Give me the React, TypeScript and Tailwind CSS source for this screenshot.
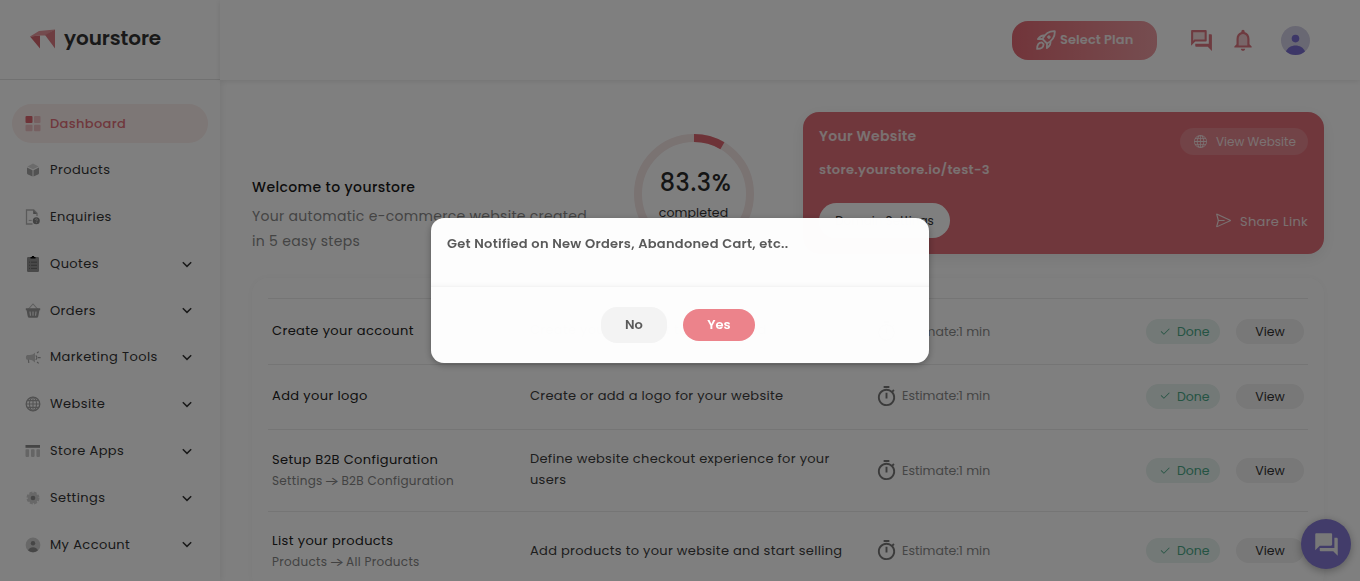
import React from "react";
import { MdForum, MdNotificationsNone, MdOutlineForum, MdOutlineTimer } from "react-icons/md";
import { VscSend } from "react-icons/vsc";
import { BsCheck2, BsGlobe } from "react-icons/bs";

function Svg({ children }: { children: React.ReactNode }) {
  return (
    <svg width="16" height="16" viewBox="0 0 16 16" fill="none" className="shrink-0">
      {children}
    </svg>
  );
}

const icons = {
  dashboard: (
    <Svg>
      <rect x="0.5" y="0" width="7" height="7" rx="1" fill="#dd6671" />
      <rect x="9" y="0" width="6.5" height="7" rx="1" fill="#edc0c3" />
      <rect x="0.5" y="8.7" width="7" height="6.5" rx="1" fill="#edc0c3" />
      <rect x="9" y="8.7" width="6.5" height="6.5" rx="1" fill="#edc0c3" />
    </Svg>
  ),
  products: (
    <Svg>
      <path d="M8 1.5l5.6 2.9L8 7.3 2.4 4.4z" fill="#d6d6d6" />
      <path d="M2 5.5l5.5 2.8v6.3L3 12.4a1.6 1.6 0 01-1-1.5z" fill="#a4a4a4" />
      <path d="M14 5.5L8.5 8.3v6.3l4.5-2.2a1.6 1.6 0 001-1.5z" fill="#a4a4a4" />
    </Svg>
  ),
  enquiries: (
    <Svg>
      <path d="M7.5 15H1.5V1h7.2L12 4.3V7" stroke="#b4b4b4" strokeWidth="1.3" />
      <path d="M8.2 1v4H12z" fill="#909090" />
      <path d="M3.7 11.4h3" stroke="#b4b4b4" />
      <circle cx="11.3" cy="11.8" r="3.5" fill="#858585" />
      <path d="M10.2 11c0-1.6 2.4-1.4 2.2 0-.1.7-1 .7-1 1.4M11.4 13.2v.8" stroke="#ddd" strokeWidth=".8" />
    </Svg>
  ),
  quotes: (
    <Svg>
      <rect x="2" y="1" width="12" height="15" rx="1.2" fill="#929292" />
      <path d="M5.5 2.6V1.1h1.2a1.3 1.3 0 012.6 0h1.2v1.5z" fill="#000" />
      <path d="M4 6.2h1M4 9.3h1M4 12.4h1M6 6.2h6M6 9.3h6M6 12.4h6" stroke="#666" />
    </Svg>
  ),
  orders: (
    <Svg>
      <path d="M3 6.5L8 1l5 5.5" stroke="#bcbcbc" strokeWidth="1.1" />
      <path d="M.8 5.2h14.4v2h-.8l-1.1 6.1a1.8 1.8 0 01-1.8 1.5h-7a1.8 1.8 0 01-1.8-1.5L1.6 7.2H.8z" fill="#9a9a9a" />
      <path d="M5 8.5l.5 4.2M8 8.5v4.2M11 8.5l-.5 4.2" stroke="#eee" strokeWidth="1.2" />
    </Svg>
  ),
  marketing: (
    <Svg>
      <path d="M1.5 5.5c1-.6 2-.3 3.2-.4 2 0 3.6-1 5.3-2.3v9.6C8.300 11 6.700 10 4.700 9.800c-1.200-.1-2.200.2-3.200-.4-.8-1-.8-3 0-3.900z" fill="#c6c6c6" />
      <path d="M2.800 9.600h1.200l.4 3.400H3.200z" fill="#aaa" />
      <path d="M10.700 5.400a2.600 2.600 0 010 4.400M12 3l1.700-1.400M13 7.600h2.600M12 12l1.700 1.400" stroke="#a2a2a2" strokeWidth="1.2" />
    </Svg>
  ),
  website: (
    <Svg>
      <circle cx="8" cy="8" r="6.8" stroke="#a0a0a0" strokeWidth="1.3" />
      <ellipse cx="8" cy="8" rx="3.5" ry="6.8" stroke="#a6a6a6" strokeWidth="1.1" />
      <path d="M8 1v14M1 8h14M2.5 4.6h11M2.5 11.4h11" stroke="#a6a6a6" strokeWidth="1.1" />
    </Svg>
  ),
  store: (
    <Svg>
      <rect x="0.5" y="2" width="14.5" height="2.8" fill="#8c8c8c" />
      <rect x="0.5" y="6.3" width="3.6" height="7.6" rx=".8" fill="#cacaca" />
      <rect x="6" y="6.3" width="3.6" height="7.6" rx=".8" fill="#cacaca" />
      <rect x="11.4" y="6.3" width="3.6" height="7.6" rx=".8" fill="#cacaca" />
    </Svg>
  ),
  settings: (
    <Svg>
      <circle cx="8" cy="8" r="5.2" fill="#d0d0d0" />
      <circle cx="8" cy="8" r="5.4" stroke="#d0d0d0" strokeWidth="2.2" strokeDasharray="3 1.24" />
      <circle cx="8" cy="8" r="2.3" fill="#8c8c8c" />
    </Svg>
  ),
  account: (
    <Svg>
      <circle cx="8" cy="8" r="7.4" fill="#d0d0d0" />
      <circle cx="8" cy="6.2" r="2.2" fill="#8c8c8c" />
      <path d="M3 13.2a5.800 5.800 0 0110 0 7.400 7.400 0 01-10 0z" fill="#8c8c8c" />
    </Svg>
  ),
};

const nav = [
  { label: "Products", icon: icons.products, expandable: false },
  { label: "Enquiries", icon: icons.enquiries, expandable: false },
  { label: "Quotes", icon: icons.quotes, expandable: true },
  { label: "Orders", icon: icons.orders, expandable: true },
  { label: "Marketing Tools", icon: icons.marketing, expandable: true },
  { label: "Website", icon: icons.website, expandable: true },
  { label: "Store Apps", icon: icons.store, expandable: true },
  { label: "Settings", icon: icons.settings, expandable: true },
  { label: "My Account", icon: icons.account, expandable: true },
];

function Sidebar() {
  return (
    <aside className="flex w-[220px] shrink-0 flex-col bg-white shadow-[0_0_8px_rgba(0,0,0,0.1)]">
      <div className="flex h-20 items-center border-b border-[#e2e2e2] pl-[30px]">
        <svg width="26" height="20" viewBox="0 0 26 20" className="-mt-px">
          <path d="M0 7.500L10 6.500V19.500z" fill="#d4666f" />
          <path d="M0 7.500L9 2 25 0.500 15 6.500 10 6.500z" fill="#e8969c" />
          <path d="M15 6L25 0.500V19.500z" fill="#dd7a83" />
        </svg>
        <span className="mt-[-4px] ml-2 text-[20px] leading-6 font-semibold tracking-[-0.1px] text-[#333]">
          yourstore
        </span>
      </div>
      <nav className="flex flex-col gap-[7.8px] px-3 pt-[24.2px]">
        <div className="flex h-[39px] items-center rounded-full bg-[#fbeeec] pl-[13px] text-[13px] font-medium text-[#e0707a]">
          {icons.dashboard}
          <span className="ml-[9px] tracking-[0.35px]">Dashboard</span>
        </div>
        {nav.map((n) => (
          <div key={n.label} className="flex h-[39px] items-center pr-4 pl-[13px] text-[13px] text-[#333]">
            {n.icon}
            <span className="-mt-px ml-[9px] flex-1 tracking-[0.4px] whitespace-nowrap">{n.label}</span>
            {n.expandable && (
              <svg width="10" height="7" viewBox="0 0 10 7" fill="none" stroke="#333" strokeWidth="1.5">
                <path d="M.8 1.2L5 5.4l4.200-4.200" />
              </svg>
            )}
          </div>
        ))}
      </nav>
    </aside>
  );
}

function Rocket() {
  return (
    <svg width="20" height="20" viewBox="0 0 20 20" fill="none" stroke="currentColor" strokeWidth="1.800" strokeLinejoin="round">
      <path d="M18.800 1.200c-5.500-.3-9.300 2-12.300 7.800l4.500 4.500c5.800-3 8.100-6.800 7.800-12.300z" />
      <path d="M8.600 5.600C5.800 5 4 6.300 1.900 9.100l4.600-.1M14.400 11.400c.6 2.800-.7 4.600-3.500 6.700l.1-4.600" />
      <path d="M5.800 12.400c-3.200.2-4.700 2.400-4.700 6.500 4.100 0 6.300-1.500 6.500-4.700z" />
      <circle cx="12.900" cy="7.100" r="1.300" fill="currentColor" strokeWidth="1" />
    </svg>
  );
}

function Header() {
  return (
    <header className="flex h-20 shrink-0 items-center justify-end bg-white pr-[50px] shadow-[0_1px_6px_rgba(0,0,0,0.1)]">
      <button className="flex h-[39px] w-[145px] items-center rounded-[16px] bg-linear-to-r from-[#e36a75] to-[#ec9ba1] pl-6 text-[#f5ecec]">
        <Rocket />
        <span className="ml-1 text-[13px] font-semibold tracking-[0.08px]">Select Plan</span>
      </button>
      <div className="relative ml-[32px] h-[25px] w-[25px] text-[#dd7780]">
        <svg width="25" height="25" viewBox="0 0 24 24" className="absolute">
          <path d="M3 3h13v9H3z" fill="#f5dcdd" />
        </svg>
        <MdOutlineForum size={25} className="absolute" />
      </div>
      <div className="relative ml-4 h-[26px] w-[26px] text-[#dd7780]">
        <svg width="26" height="26" viewBox="0 0 24 24" className="absolute">
          <path d="M7 18v-7a5 5 0 0110 0v7z" fill="#f1cdd0" />
        </svg>
        <MdNotificationsNone size={26} className="absolute" />
      </div>
      <svg width="29" height="29" viewBox="0 0 29 29" className="ml-[25px]">
        <circle cx="14.500" cy="14.500" r="14.500" fill="#d3d0e6" />
        <circle cx="14.500" cy="12.600" r="3.800" fill="#7a6fd0" />
        <path d="M5 25.400c3-8 16-8 19 0a14.500 14.500 0 01-19 0z" fill="#7a6fd0" />
      </svg>
    </header>
  );
}

function Intro() {
  return (
    <section className="flex h-[142px]">
      <div className="w-[382px] pt-[64px]">
        <h1 className="text-[14px] leading-[22px] font-medium tracking-[0.39px] text-[#1a1a1a]">Welcome to yourstore</h1>
        <p className="mt-[6px] text-[14px] leading-[25px] tracking-[0.3px] whitespace-nowrap text-[#888]">
          Your automatic e-commerce website created
          <br />
          in 5 easy steps
        </p>
      </div>
      <div className="grid w-[120px] pt-[22px]">
        <svg width="120" height="120" viewBox="0 0 120 120" fill="none" className="col-start-1 row-start-1">
          <circle cx="60" cy="60" r="56" stroke="#f4e6e5" strokeWidth="8" />
          <path d="M60 4A56 56 0 0188.400 11.700" stroke="#dd6670" strokeWidth="8" />
        </svg>
        <div className="col-start-1 row-start-1 flex flex-col items-center pt-8">
          <span className="pl-[3px] text-[24px] leading-[34px] font-medium tracking-[0.6px] text-[#2b2b2b]">83.3%</span>
          <span className="mt-[3px] pr-px text-[12.500px] leading-5 tracking-[0.1px] text-[#333]">completed</span>
        </div>
      </div>
      <div className="ml-[49px] flex w-[521px] justify-between rounded-[16px] bg-[#e06f79] px-4 pt-4 pb-4 text-[#f4e2e3] shadow-[0_4px_16px_rgba(0,0,0,0.08)]">
        <div className="flex flex-col items-start">
          <span className="h-4 text-[14px] leading-4 font-semibold tracking-[0.28px]">Your Website</span>
          <span className="mt-[18px] text-[13px] leading-4 font-semibold tracking-[0.32px]">store.yourstore.io/test-3</span>
          <span className="mt-[25px] flex h-[35px] w-[131px] items-center justify-center rounded-full bg-white text-[12px] text-[#333]">
            Domain Settings
          </span>
        </div>
        <div className="flex flex-col items-end">
          <span className="flex h-[27px] w-32 items-center rounded-full bg-[#e5868e] pl-[14px]">
            <BsGlobe size={13} />
            <span className="mt-px ml-[9px] text-[12px]">View Website</span>
          </span>
          <span className="mt-[54px] flex items-center">
            <VscSend size={17} className="-mt-px" />
            <span className="mt-[3px] ml-2 text-[13px] leading-5 tracking-[0.3px]">Share Link</span>
          </span>
        </div>
      </div>
    </section>
  );
}

const steps = [
  {
    name: "Create your account",
    path: [],
    desc: "Create your account to get started",
    row: "h-[66px]",
    nameShift: "pb-0.5",
    descShift: "pb-1",
  },
  {
    name: "Add your logo",
    path: [],
    desc: "Create or add a logo for your website",
    row: "h-[65px] pb-0.5",
    nameShift: "pb-px",
    descShift: "pb-px",
  },
  {
    name: "Setup B2B Configuration",
    path: ["Settings", "B2B Configuration"],
    desc: "Define website checkout experience for your users",
    row: "h-[82px]",
    nameShift: "pb-0",
    descShift: "pb-1",
  },
  {
    name: "List your products",
    path: ["Products", "All Products"],
    desc: "Add products to your website and start selling",
    row: "h-[80px] pb-0.5",
    nameShift: "pt-0.5",
    descShift: "pb-0",
  },
];

function Steps() {
  return (
    <section className="mt-[24px] w-[1072px] rounded-[16px] bg-white px-4 pt-5 shadow-[0_0_10px_rgba(0,0,0,0.04)]">
      {steps.map((s) => (
        <div key={s.name} className={"flex items-center border-t border-[#ebebeb] pl-1 " + s.row}>
          <div className={"w-[258px] shrink-0 " + s.nameShift}>
            <div className="text-[13px] leading-[21px] tracking-[0.38px] text-[#222]">{s.name}</div>
            {s.path.length > 0 && (
              <div className="text-[12px] leading-[22px] tracking-[0.3px] text-[#858585]">
                {s.path[0]} <span className="inline-block scale-x-[1.35] leading-none">→</span> {s.path[1]}
              </div>
            )}
          </div>
          <div
            className={
              "w-[345px] shrink-0 pr-3 text-[13px] leading-[21px] tracking-[0.3px] text-[#3c3c3c] " + s.descShift
            }
          >
            {s.desc}
          </div>
          <MdOutlineTimer size={23} className="shrink-0 text-[#777]" />
          <span className="mt-px ml-1 flex-1 text-[12.500px] text-[#8a8a8a]">Estimate:1 min</span>
          <span className="flex h-[25px] w-[74px] items-center rounded-full bg-[#e6f2ee] pl-[13px] text-[#4aa886]">
            <BsCheck2 size={12} />
            <span className="mt-0.5 ml-[6px] text-[12.500px]">Done</span>
          </span>
          <span className="mr-1 ml-4 flex h-[25px] w-[68px] items-center justify-center rounded-full bg-[#f0f0f0] pt-0.5 text-[12.500px] text-[#333]">
            View
          </span>
        </div>
      ))}
    </section>
  );
}

function NotifyDialog() {
  return (
    <div className="fixed inset-0 flex items-start justify-center bg-black/50 pt-[218px]">
      <div className="h-[145px] w-[498px] rounded-[13px] bg-white/99 shadow-[0_2px_7px_rgba(0,0,0,0.3)]">
        <div className="h-[69px] border-b border-[#f4f4f4] px-4 pt-[15px] shadow-[inset_0_-4px_5px_-4px_rgba(0,0,0,0.05)]">
          <h2 className="text-[13px] leading-[21px] font-semibold tracking-[0.28px] text-[#5a5a5a]">
            Get Notified on New Orders, Abandoned Cart, etc..
          </h2>
        </div>
        <div className="flex items-center justify-center gap-4 pt-5 pr-[4px]">
          <button className="h-9 w-[66px] rounded-[16px] bg-[#f3f3f3] text-[13px] leading-4 font-semibold text-[#5a5a5a]">
            No
          </button>
          <button className="h-8 w-[72px] rounded-[16px] bg-[#ec838b] text-[13px] leading-4 font-semibold text-white">
            Yes
          </button>
        </div>
      </div>
    </div>
  );
}

export default function App() {
  return (
    <div className="flex h-[581px] w-[1360px] overflow-hidden bg-white font-[Poppins,Inter,sans-serif]">
      <Sidebar />
      <div className="flex min-w-0 flex-1 flex-col">
        <Header />
        <main className="px-8 pt-8">
          <Intro />
          <Steps />
        </main>
      </div>
      <div className="fixed right-[9px] bottom-[12px] flex h-[50px] w-[50px] items-center justify-center rounded-full bg-[#8478d4] text-[#f0f0f0] shadow-[0_2px_8px_rgba(0,0,0,0.3)]">
        <MdForum size={27} />
      </div>
      <NotifyDialog />
    </div>
  );
}
